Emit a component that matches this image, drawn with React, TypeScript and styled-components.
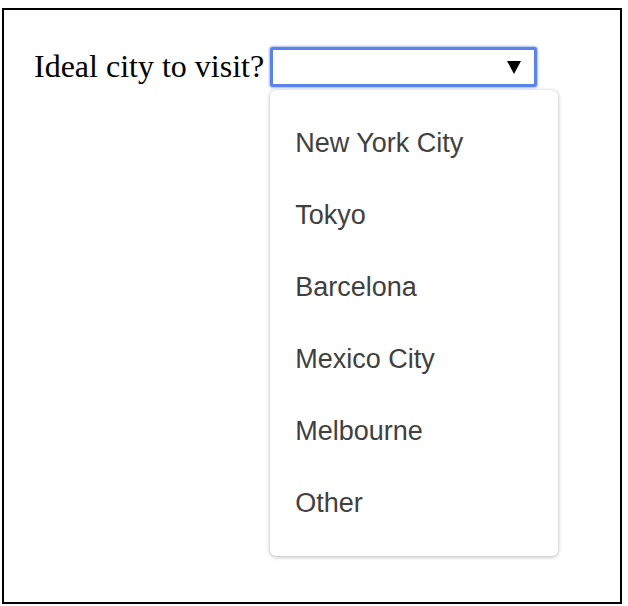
import React from 'react';
import styled, { createGlobalStyle } from 'styled-components';

const GlobalStyle = createGlobalStyle`
  html, body {
    margin: 0;
    padding: 0;
    background: #ffffff;
  }
`;

const Frame = styled.div`
  margin: 8px 0 0 2px;
  width: 616px;
  height: 592px;
  border: 2px solid #000000;

  display: flex;
  flex-direction: column;
  align-items: flex-start;
`;

const Row = styled.div`
  margin: 37px 0 0 30px;

  display: flex;
  flex-direction: row;
  align-items: center;
`;

const Label = styled.label`
  font-family: 'Liberation Serif', 'Times New Roman', serif;
  font-size: 32px;
  line-height: 1.1;
  color: #000000;
`;

const SelectWrap = styled.div`
  position: relative;
  margin-left: 6px;
`;

const SelectBox = styled.div`
  width: 267px;
  height: 40px;
  box-sizing: border-box;
  border: 3px solid #5b83e8;
  border-radius: 3px;
  box-shadow: 0 0 2px 1px rgba(91, 131, 232, 0.55);
  background: #ffffff;

  display: flex;
  align-items: center;
  justify-content: flex-end;
  padding-right: 13px;
`;

const Arrow = styled.svg`
  width: 14px;
  height: 13px;
`;

const Menu = styled.ul`
  position: absolute;
  top: 43px;
  left: 0;
  width: 288px;
  margin: 0;
  padding: 17px 0;
  list-style: none;
  box-sizing: border-box;

  background: #ffffff;
  border-radius: 6px;
  box-shadow: 0 1px 4px rgba(0, 0, 0, 0.28), 0 0 1px rgba(0, 0, 0, 0.15);
`;

const Item = styled.li`
  height: 72px;
  padding-left: 25px;

  display: flex;
  align-items: center;

  font-family: 'Liberation Sans', Arial, sans-serif;
  font-size: 27px;
  color: #404040;
`;

const cities = ['New York City', 'Tokyo', 'Barcelona', 'Mexico City', 'Melbourne', 'Other'];

const App: React.FC = () => {
  return (
    <>
      <GlobalStyle />
      <Frame>
        <Row>
          <Label>Ideal city to visit?</Label>
          <SelectWrap>
            <SelectBox>
              <Arrow viewBox="0 0 14 13">
                <path d="M0 0 H14 L7 13 Z" fill="#000000" />
              </Arrow>
            </SelectBox>
            <Menu>
              {cities.map((city) => (
                <Item key={city}>{city}</Item>
              ))}
            </Menu>
          </SelectWrap>
        </Row>
      </Frame>
    </>
  );
};

export default App;
